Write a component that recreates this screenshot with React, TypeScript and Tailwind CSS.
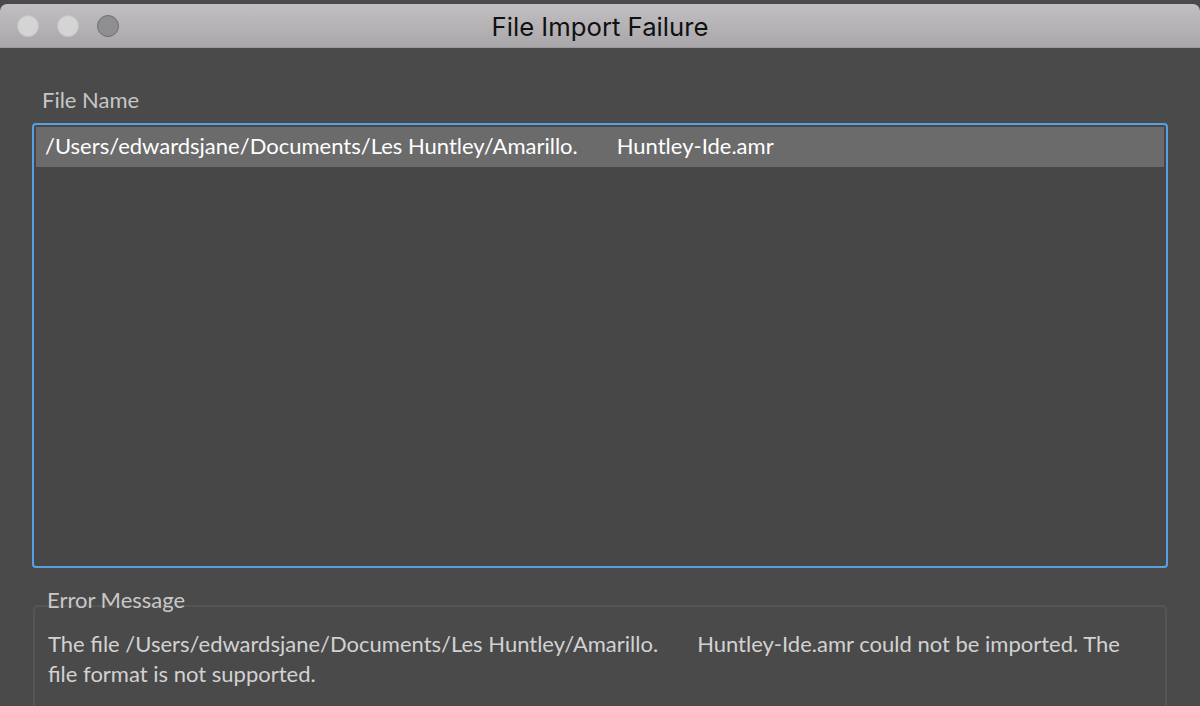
import React from "react";

const body = { fontFamily: "Lato, 'Open Sans', 'Noto Sans', sans-serif" };

function TrafficLights() {
	return (
		<div className="flex items-center gap-[18px] pl-[17px]">
			<span className="block h-[22px] w-[22px] rounded-full border border-[#c6c6c6] bg-[#d4d4d4]" />
			<span className="block h-[22px] w-[22px] rounded-full border border-[#c6c6c6] bg-[#d4d4d4]" />
			<span className="block h-[22px] w-[22px] rounded-full border border-[#6e6d71] bg-[#8f8e92]" />
		</div>
	);
}

const Gap = () => <span className="inline-block w-[39px]" />;

export default function App() {
	return (
		<div className="h-[706px] w-[1200px] overflow-hidden bg-[#4a4a4a] pt-[4px]" style={body}>
			{/* title bar */}
			<div className="grid h-[44px] grid-cols-[1fr_auto_1fr] items-center rounded-t-[7px] border-b border-[#9a989a] bg-gradient-to-b from-[#c1bfc1] to-[#a9a7a9]">
				<TrafficLights />
				<h1
					className="pt-[3px] text-[25.7px] leading-none text-[#111]"
					style={{ fontFamily: "Inter, 'Liberation Sans', sans-serif" }}
				>
					File Import Failure
				</h1>
				<div />
			</div>

			<div className="px-[32px]">
				<div className="mt-[38px] pl-[10px] text-[22px] leading-[28px] text-[#c6c6c6]">File Name</div>

				<div className="mt-[9px] h-[445px] rounded-[4px] border-2 border-[#5a9ee4] bg-[#474747] p-[2px]">
					<div className="flex h-[40px] items-center bg-[#6b6b6b] pb-[3px] pl-[9px] text-[22px] text-white">
						<span>
							/Users/edwardsjane/Documents/Les Huntley/Amarillo.<Gap />Huntley-Ide.amr
						</span>
					</div>
				</div>

				<div className="mt-[18px] pl-[15px] text-[22px] leading-[28px] text-[#c8c8c8]">Error Message</div>
				<div className="mx-[1px] -mt-[9px] h-[200px] rounded-[5px] border-2 border-[#555555] pl-[13px] pt-[22px]">
					<p className="text-[22px] leading-[30px] text-[#d2d2d2]">
						The file /Users/edwardsjane/Documents/Les Huntley/Amarillo.<Gap />Huntley-Ide.amr could not be imported. The
						<br />
						file format is not supported.
					</p>
				</div>
			</div>
		</div>
	);
}
